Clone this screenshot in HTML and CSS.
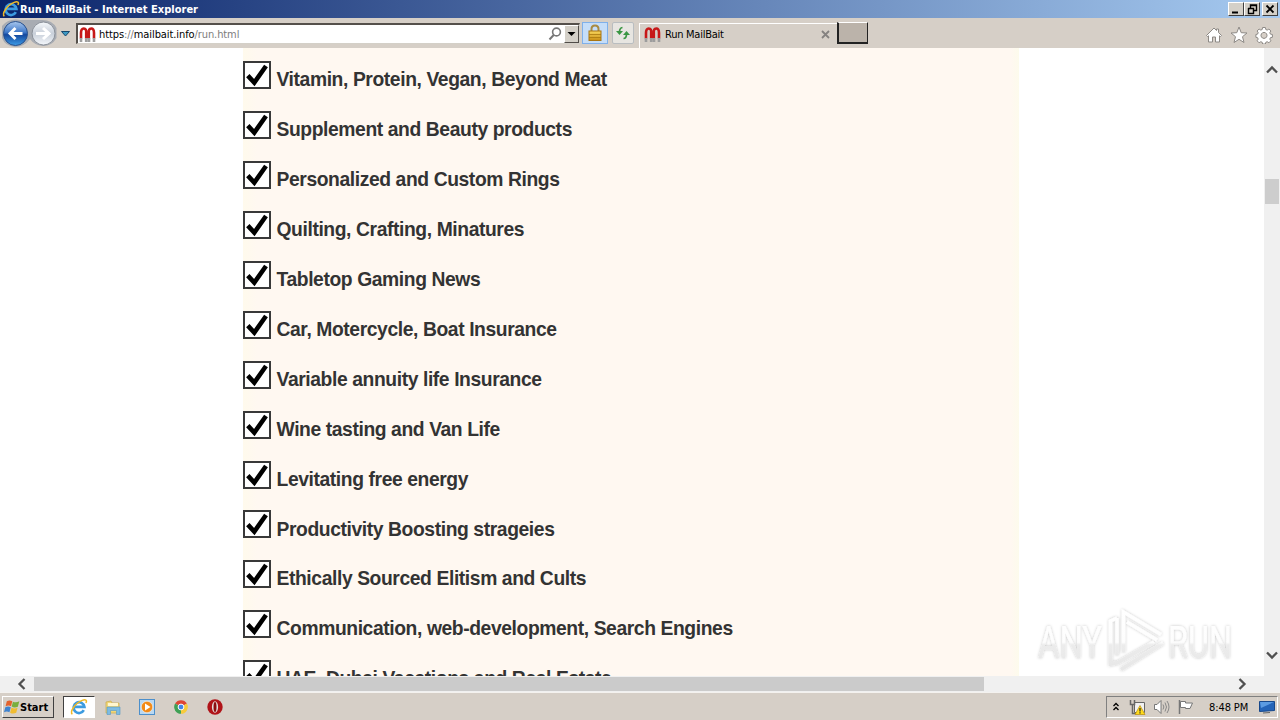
FILE: index.html
```html
<!DOCTYPE html>
<html lang="en">
<head>
    <meta charset="UTF-8">
    <title>Run MailBait</title>
    <link rel="stylesheet" href="styles.css">
</head>
<body>
<svg class="defs" width="0" height="0">
    <defs>
        <linearGradient id="blueBall" x1="0" y1="0" x2="0" y2="1">
            <stop offset="0" stop-color="#a9c8ee"/>
            <stop offset=".45" stop-color="#3f78c8"/>
            <stop offset=".55" stop-color="#14489e"/>
            <stop offset="1" stop-color="#3c9be6"/>
        </linearGradient>
        <linearGradient id="greyBall" x1="0" y1="0" x2="0" y2="1">
            <stop offset="0" stop-color="#f6f9fc"/>
            <stop offset=".5" stop-color="#c9d0da"/>
            <stop offset="1" stop-color="#f4f7fb"/>
        </linearGradient>
        <linearGradient id="gold" x1="0" y1="0" x2="0" y2="1">
            <stop offset="0" stop-color="#f7d55c"/>
            <stop offset="1" stop-color="#c98e14"/>
        </linearGradient>
        <linearGradient id="markFade" gradientUnits="userSpaceOnUse" x1="0" y1="4" x2="0" y2="68">
            <stop offset="0" stop-color="#ffffff"/>
            <stop offset=".52" stop-color="#fdfdfd"/>
            <stop offset=".56" stop-color="#ececec"/>
            <stop offset="1" stop-color="#e6e6e6"/>
        </linearGradient>
        <filter id="markShadow" x="-10%" y="-10%" width="120%" height="120%">
            <feDropShadow dx="0" dy="0" stdDeviation="1.5" flood-color="#000" flood-opacity=".24"/>
        </filter>
    </defs>
    <symbol id="tick" viewBox="0 0 24 24">
        <path d="M2.8 12.6 L9.3 19.6 L21 3" fill="none" stroke="#000" stroke-width="4.6"/>
    </symbol>
    <symbol id="ie" viewBox="0 0 18 18">
        <path d="M13.8 12.2 A5.4 5.4 0 1 1 14.4 8.9 H5" fill="none" stroke="#3c9be0" stroke-width="2.7"/>
        <path d="M2.4 16.2 C-.8 14.5 4.8 5.2 12.2 2.4 C15.6 1.1 17.4 2.2 15.9 5" fill="none" stroke="#efb928" stroke-width="1.5"/>
    </symbol>
    <symbol id="magnet" viewBox="0 0 17 17">
        <path d="M2 12.500 V7 Q2 2.500 4.800 2.500 T7.200 7 V12.500 M9.800 12.500 V7 Q9.400 2.500 12.200 2.500 T15 7 V12.500" fill="none" stroke="#c71818" stroke-width="2.600"/>
        <path d="M.7 12 h2.600 v4 h-2.600z M5.900 12 h2.600 v4 h-2.600z M8.700 12 h2.600 v4 h-2.600z M13.700 12 h2.600 v4 h-2.600z" fill="#9d9d9d"/>
    </symbol>
</svg>

<div class="titlebar">
    <svg class="title-icon" viewBox="0 0 18 18"><use href="#ie"/></svg>
    <span class="title-text">Run MailBait - Internet Explorer</span>
    <div class="win-buttons">
        <span class="win-btn"><svg viewBox="0 0 14 12"><path d="M3 9.5 h6" stroke="#000" stroke-width="2"/></svg></span>
        <span class="win-btn"><svg viewBox="0 0 14 12"><path d="M5.5 5 V2 H11.5 V7.5 H9 M5 2.5 H12 M3.5 5 V10.5 H8.5 V5.5 H3" fill="none" stroke="#000" stroke-width="1.4"/></svg></span>
        <span class="win-btn close"><svg viewBox="0 0 14 12"><path d="M3.5 2.5 L10.5 9.5 M10.5 2.5 L3.5 9.5" stroke="#000" stroke-width="1.8"/></svg></span>
    </div>
</div>

<div class="toolbar">
    <svg class="nav" viewBox="0 0 74 30">
        <path d="M2 8 Q9 0 20 2 H40 Q52 1 56.500 10 V20 Q52 28 43 28 Q34 27 30 21 Q24 29 15 29 Q5 28 2 20 Z" fill="#a8acb3"/>
        <circle cx="15.500" cy="15.500" r="12" fill="url(#blueBall)" stroke="#28508c"/>
        <path d="M15.500 10 L10 15.500 L15.500 21 M10.500 15.500 H22.500" fill="none" stroke="#fff" stroke-width="2.900"/>
        <circle cx="43.500" cy="15.500" r="11.500" fill="url(#greyBall)" stroke="#8a9099"/>
        <path d="M43 10 L49 15.500 L43 21 M48 15.500 H36" fill="none" stroke="#fff" stroke-width="3"/>
        <path d="M61.500 13.500 H69.500 L65.500 18 Z" fill="#3d9ac4" stroke="#17496e"/>
    </svg>
    <div class="address">
        <svg class="favicon" viewBox="0 0 17 17"><use href="#magnet"/></svg>
        <span class="url">https<i>://</i>mailbait.info<i>/run.html</i></span>
        <svg class="search" viewBox="0 0 14 14"><circle cx="8.500" cy="5" r="3.900" fill="none" stroke="#777" stroke-width="1.600"/><path d="M5.700 8 L1.500 12.500" stroke="#777" stroke-width="2"/></svg>
        <span class="drop"><svg viewBox="0 0 13 17"><path d="M2.500 6 H10.500 L6.500 10 Z"/></svg></span>
    </div>
    <div class="tool lock">
        <svg viewBox="0 0 24 20">
            <path d="M8.500 9 V6 Q8.500 2.500 12 2.500 T15.500 6 V9" fill="none" stroke="#a98a40" stroke-width="2"/>
            <rect x="6" y="8" width="12" height="9.500" fill="url(#gold)" stroke="#a87512"/>
            <path d="M6 11.500 H18 M6 14.500 H18" stroke="#a9780f" stroke-width=".8"/>
        </svg>
    </div>
    <div class="tool refresh">
        <svg viewBox="0 0 20 20">
            <path d="M9.500 4.500 Q6.500 5 6.500 9" fill="none" stroke="#3a9643" stroke-width="1.700"/>
            <path d="M3 8 H10 L6.500 12 Z" fill="#3a9643"/>
            <path d="M10.500 15.500 Q13.500 15.500 13.500 11" fill="none" stroke="#3a9643" stroke-width="1.700"/>
            <path d="M10 12 H17 L13.500 8 Z" fill="#3a9643"/>
        </svg>
    </div>
    <div class="tab">
        <svg class="favicon" viewBox="0 0 17 17"><use href="#magnet"/></svg>
        <span class="tab-text">Run MailBait</span>
        <svg class="tab-close" viewBox="0 0 9 9"><path d="M1 1 L8 8 M8 1 L1 8" stroke="#858280" stroke-width="1.800"/></svg>
    </div>
    <div class="new-tab"></div>
    <div class="tool-icons">
        <svg viewBox="0 0 18 18"><path d="M1.500 9.500 L9 2 L11.500 4.500 V3 H13.500 V6.500 L16.500 9.500 L15.500 10.500 L14.500 9.800 V16 H10.500 V11 H7.500 V16 H3.500 V9.800 L2.500 10.500 Z"/></svg>
        <svg viewBox="0 0 18 18"><path d="M9 1 L11.200 6.700 L17 7 L12.500 10.700 L14 16.500 L9 13.300 L4 16.500 L5.500 10.700 L1 7 L6.800 6.700 Z"/></svg>
        <svg viewBox="0 0 18 18"><path fill-rule="evenodd" d="M7.600 1.500 h2.800 l.4 2 1.400.6 1.700-1.100 2 2 -1.100 1.700.6 1.400 2 .4 v2.800 l-2 .4 -.6 1.400 1.100 1.700 -2 2 -1.700-1.100 -1.400.6 -.4 1.700 h-2.800 l-.4-1.700 -1.400-.6 -1.700 1.100 -2-2 1.100-1.700 -.6-1.400 -1.700-.4 v-2.800 l1.700-.4 .6-1.400 -1.100-1.700 2-2 1.700 1.100 1.400-.6 Z M9 6.400 a3 3 0 1 0 .01 0 Z"/></svg>
    </div>
</div>

<div class="viewport">
    <div class="page">
        <div class="content">
            <div class="item"><span class="box"><svg><use href="#tick"/></svg></span><label>Vitamin, Protein, Vegan, Beyond Meat</label></div>
            <div class="item"><span class="box"><svg><use href="#tick"/></svg></span><label>Supplement and Beauty products</label></div>
            <div class="item"><span class="box"><svg><use href="#tick"/></svg></span><label>Personalized and Custom Rings</label></div>
            <div class="item"><span class="box"><svg><use href="#tick"/></svg></span><label>Quilting, Crafting, Minatures</label></div>
            <div class="item"><span class="box"><svg><use href="#tick"/></svg></span><label>Tabletop Gaming News</label></div>
            <div class="item"><span class="box"><svg><use href="#tick"/></svg></span><label>Car, Motercycle, Boat Insurance</label></div>
            <div class="item"><span class="box"><svg><use href="#tick"/></svg></span><label>Variable annuity life Insurance</label></div>
            <div class="item"><span class="box"><svg><use href="#tick"/></svg></span><label>Wine tasting and Van Life</label></div>
            <div class="item"><span class="box"><svg><use href="#tick"/></svg></span><label>Levitating free energy</label></div>
            <div class="item"><span class="box"><svg><use href="#tick"/></svg></span><label>Productivity Boosting strageies</label></div>
            <div class="item"><span class="box"><svg><use href="#tick"/></svg></span><label>Ethically Sourced Elitism and Cults</label></div>
            <div class="item"><span class="box"><svg><use href="#tick"/></svg></span><label>Communication, web-development, Search Engines</label></div>
            <div class="item"><span class="box"><svg><use href="#tick"/></svg></span><label>UAE, Dubai Vacations and Real Estate</label></div>
        </div>
    </div>
    <div class="vscroll">
        <svg viewBox="0 0 16 10"><path d="M3 7.500 L8 2.500 L13 7.500"/></svg>
        <div class="vthumb"></div>
        <svg viewBox="0 0 16 10"><path d="M3 2.500 L8 7.500 L13 2.500"/></svg>
    </div>
    <svg class="watermark" viewBox="0 0 210 71">
        <g filter="url(#markShadow)" fill="url(#markFade)">
            <text x="8" y="53" textLength="64" lengthAdjust="spacingAndGlyphs">ANY</text>
            <text x="138" y="53" textLength="64" lengthAdjust="spacingAndGlyphs">RUN</text>
            <g fill="none" stroke="url(#markFade)" stroke-width="3.500">
                <path d="M87 13 L80.500 16 V59 L88 57.500 L124 37"/>
                <path d="M87 50 V13"/>
                <path d="M93.500 47 V7 L131 29.500"/>
                <path d="M97 17 L127 35"/>
                <path d="M133 38 L91 64.500"/>
            </g>
        </g>
    </svg>
</div>

<div class="hscroll">
    <svg viewBox="0 0 10 16"><path d="M7.500 3 L2.500 8 L7.500 13"/></svg>
    <div class="hthumb"></div>
    <svg viewBox="0 0 10 16"><path d="M2.500 3 L7.500 8 L2.500 13"/></svg>
</div>

<div class="taskbar">
    <div class="start">
        <svg viewBox="0 0 17 16">
            <path d="M3 2 Q6 0 8.800 2 L7.500 7.300 Q5 5.700 1.700 7.300 Z" fill="#e4622c"/>
            <path d="M9.500 2.300 Q12.500 4 16.300 2 L14.700 7.800 Q11 9.500 8.200 7.600 Z" fill="#79ae3d"/>
            <path d="M1.400 8.300 Q4.500 6.700 7.200 8.300 L5.800 13.500 Q3 12 0 13.500 Z" fill="#3f83cf"/>
            <path d="M8 8.600 Q11 10.300 14.400 8.800 L13 14.200 Q9.500 15.800 6.500 14 Z" fill="#f0bc31"/>
        </svg>
        <span>Start</span>
    </div>
    <div class="pinned active"><svg viewBox="0 0 18 18"><use href="#ie"/></svg></div>
    <div class="pinned">
        <svg viewBox="0 0 18 18">
            <path d="M2 4 L7 3 L8 5 H15 V15 H2 Z" fill="#f1d778" stroke="#c9a94b" stroke-width=".7"/>
            <path d="M4 5 H14 V8 H4 Z" fill="#fff6cf"/>
            <path d="M3 9 H16 V16.500 H12.500 V12.500 H6.500 V16.500 H3 Z" fill="#7dbbe2" stroke="#5597c4" stroke-width=".6"/>
        </svg>
    </div>
    <div class="pinned">
        <svg viewBox="0 0 18 18">
            <rect x="1.500" y="1.500" width="15" height="15" fill="#b9d8f2" stroke="#4c8fcb"/>
            <circle cx="9" cy="9" r="5.700" fill="#f28a17" stroke="#fff" stroke-width=".5"/>
            <path d="M7 5.500 L12.500 9 L7 12.500 Z" fill="#fff"/>
        </svg>
    </div>
    <div class="pinned">
        <svg viewBox="0 0 18 18">
            <path d="M9 9 L3.100 5.600 A6.800 6.800 0 0 1 14.900 5.600 Z" fill="#de4535"/>
            <path d="M9 9 L14.900 5.600 A6.800 6.800 0 0 1 9 15.800 Z" fill="#f7cb3c"/>
            <path d="M9 9 V15.800 A6.800 6.800 0 0 1 3.100 5.600 Z" fill="#3fa055"/>
            <circle cx="9" cy="9" r="2.900" fill="#4285e8" stroke="#fff"/>
        </svg>
    </div>
    <div class="pinned">
        <svg viewBox="0 0 18 18">
            <circle cx="9" cy="9" r="7.700" fill="#b01318"/>
            <ellipse cx="9" cy="9" rx="3.100" ry="5.800" fill="#e4dedc"/>
            <ellipse cx="9" cy="9" rx="1.500" ry="5" fill="#8c0d10"/>
        </svg>
    </div>
    <div class="tray">
        <svg class="chevrons" viewBox="0 0 8 10"><path d="M1.500 4 L4 1.500 L6.500 4 M1.500 8 L4 5.500 L6.500 8" fill="none" stroke="#000" stroke-width="1.300"/></svg>
        <svg class="network" viewBox="0 0 17 16">
            <path d="M5.500 3.500 H15.500 V13.500 H5.500 Z" fill="#f1f1f1" stroke="#666"/>
            <path d="M1.500 1 V5.500 H5.500 V1 M3.500 5.500 V14.500 H8" fill="none" stroke="#666" stroke-width="1.500"/>
            <path d="M11 6.500 L16 15.500 H6 Z" fill="#ffdb1c" stroke="#b88d0c" stroke-width=".7"/>
            <path d="M11 9 V12.500 M11 13.300 V14.500" stroke="#222" stroke-width="1.200"/>
        </svg>
        <svg class="volume" viewBox="0 0 17 16">
            <path d="M1.500 5.500 H4 L8 1.500 V14.500 L4 10.500 H1.500 Z" fill="#fff" stroke="#777"/>
            <path d="M10 5.500 Q11.700 8 10 10.500 M12 3.500 Q15 8 12 12.500 M14 2 Q18 8 14 14" fill="none" stroke="#888"/>
        </svg>
        <svg class="flag" viewBox="0 0 17 16">
            <path d="M2.500 1 V15" stroke="#777" stroke-width="1.500"/>
            <path d="M3.500 2.500 H8.500 V4 H15.500 L13 9.500 H8.500 V8.500 H3.500 Z" fill="#fff" stroke="#777"/>
        </svg>
        <span class="clock">8:48 PM</span>
        <svg class="desktop" viewBox="0 0 16 14"><path d="M.5 1.500 H15.500 V10.500 L.5 11.500 Z" fill="#2464b8" stroke="#17488b"/><path d="M1 2 H15 L2 8 Z" fill="#5b9be2"/><path d="M4 13 L11 12.500" stroke="#666"/></svg>
    </div>
</div>
</body>
</html>
```

FILE: styles.css
```css
* {
    box-sizing: border-box;
}

body {
    margin: 0;
    width: 1280px;
    height: 720px;
    overflow: hidden;
    display: flex;
    flex-direction: column;
    background-color: #fff;
    font-family: "DejaVu Sans Condensed", "DejaVu Sans", sans-serif;
    font-size: 11px;
    color: #000;
}

svg {
    display: block;
    flex: none;
}

.defs {
    height: 0;
}

/* window title */
.titlebar {
    flex: none;
    display: flex;
    align-items: center;
    height: 18px;
    padding-left: 2px;
    background: linear-gradient(to right, #0a246a, #a6caf0);
}

.title-icon {
    width: 18px;
    height: 18px;
}

.title-text {
    flex: 1;
    color: #fff;
    font-weight: bold;
    white-space: nowrap;
    letter-spacing: 0.01px;
}

.win-buttons {
    display: flex;
    padding-right: 2px;
}

.win-btn {
    width: 16px;
    height: 14px;
    background-color: #d4d0c8;
    border: 1px solid;
    border-color: #fff #404040 #404040 #fff;
}

.close {
    margin-left: 2px;
}

/* navigation and tabs */
.toolbar {
    flex: none;
    display: flex;
    align-items: flex-start;
    height: 30px;
    background-color: #d6cfc7;
}

.nav {
    width: 74px;
    height: 30px;
}

.address {
    display: flex;
    align-items: center;
    width: 504px;
    height: 21px;
    margin: 5px 0 0 2px;
    padding-left: 1px;
    background-color: #fff;
    border: 1px solid #d4d0c8;
    border-color: #55504b #d4d0c8 #d4d0c8 #55504b;
    border-width: 2px 1px 1px 2px;
}

.favicon {
    width: 17px;
    height: 17px;
}

.url {
    flex: 1;
    margin-left: 3px;
    white-space: nowrap;
    letter-spacing: -0.09px;
}

.url i {
    font-style: normal;
    color: #7d7d7d;
}

.search {
    width: 14px;
    height: 14px;
    margin-right: 2px;
}

.drop {
    width: 15px;
    height: 18px;
    background-color: #d4d0c8;
    border: 1px solid;
    border-color: #fff #504c48 #504c48 #fff;
}

.tool {
    height: 22px;
    margin-top: 4px;
    border: 1px solid #7fb0ea;
}

.lock {
    width: 26px;
    margin-left: 2px;
    background-color: #c5ddf8;
}

.refresh {
    width: 22px;
    margin-left: 4px;
    background-color: #e7e5e1;
    border-color: #b9bdc0;
    border-radius: 2px;
}

.tab {
    display: flex;
    align-items: center;
    width: 198px;
    height: 25px;
    margin: 5px 0 0 5px;
    padding: 0 7px 4px 4px;
    border-top: 1px solid #fff;
    border-left: 1px solid #fff;
}

.tab-text {
    flex: 1;
    margin-left: 4px;
    letter-spacing: -0.25px;
}

.tab-close {
    width: 9px;
    height: 9px;
}

.new-tab {
    width: 31px;
    height: 22px;
    margin-top: 4px;
    background-color: #bbb3aa;
    border: 1px solid;
    border-color: #fff #222 #222 #222;
    border-width: 1px 1px 2px 2px;
}

.tool-icons {
    display: flex;
    gap: 7px;
    margin: 8px 7px 0 auto;
}

.tool-icons svg {
    width: 18px;
    height: 18px;
    fill: #fff;
    stroke: #8d8985;
}

/* web page */
.viewport {
    position: relative;
    display: flex;
    height: 628px;
    overflow: hidden;
}

.page {
    flex: 1;
    padding-left: 243px;
}

.content {
    width: 776px;
    height: 628px;
    overflow: hidden;
    padding-top: 13.3px;
    background: linear-gradient(to right, #fffaec, #fff8f1 14px, #fff8f1 768px, #fdfbec);
}

.item {
    display: flex;
    height: 49.91px;
}

.box {
    width: 28px;
    height: 28px;
    background-color: #fff;
    border: 2px solid #393939;
}

.box svg {
    width: 24px;
    height: 24px;
}

.item label {
    margin-left: 5.5px;
    padding-top: 8.1px;
    font: bold 19.3px/22px "Liberation Sans", Arial, sans-serif;
    letter-spacing: -0.4px;
    color: #333;
    white-space: nowrap;
}

.vscroll {
    display: flex;
    flex-direction: column;
    align-items: center;
    width: 16px;
    padding: 17px 0 16px;
    background-color: #f0f0f0;
}

.vscroll svg {
    width: 16px;
    height: 10px;
}

.vscroll path,
.hscroll path {
    fill: none;
    stroke: #505050;
    stroke-width: 2.3;
}

.vthumb {
    width: 14px;
    height: 25px;
    margin: 104px 0 auto;
    background-color: #cdcdcd;
}

/* logo laid over the page */
.watermark {
    position: absolute;
    left: 1030px;
    top: 557px;
    width: 210px;
    height: 71px;
    font: 45px Roboto, sans-serif;
}

.hscroll {
    flex: none;
    display: flex;
    align-items: center;
    height: 16px;
    padding: 0 33px 0 17px;
    background-color: #f0f0f0;
}

.hscroll svg {
    width: 10px;
    height: 16px;
}

.hthumb {
    width: 950px;
    height: 14px;
    margin: 0 auto 0 7px;
    background-color: #cbcbcb;
}

/* taskbar */
.taskbar {
    flex: none;
    display: flex;
    align-items: center;
    height: 28px;
    padding: 1px 2px 0;
    background-color: #d6cfc7;
    border-top: 1px solid #f4f2ef;
}

.start {
    display: flex;
    align-items: center;
    width: 52px;
    height: 22px;
    padding-left: 1px;
    font-weight: bold;
    border: 1px solid;
    border-color: #fff #404040 #404040 #fff;
}

.start svg {
    width: 16px;
    height: 16px;
}

.pinned {
    display: flex;
    align-items: center;
    justify-content: center;
    width: 32px;
    height: 22px;
    margin-right: 2px;
}

.pinned svg {
    width: 18px;
    height: 18px;
}

.pinned.active {
    margin-left: 9px;
    background-color: #fff;
    border: 1px solid;
    border-color: #404040 #fff #fff #404040;
}

.tray {
    display: flex;
    align-items: center;
    width: 172px;
    height: 22px;
    margin-left: auto;
    padding-left: 5px;
    border: 1px solid;
    border-color: #808080 #fff #fff #808080;
}

.chevrons {
    width: 8px;
    height: 10px;
}

.network,
.volume,
.flag {
    width: 17px;
    height: 16px;
}

.network {
    margin-left: 9px;
}

.volume,
.flag {
    margin-left: 7px;
}

.clock {
    margin-left: 15px;
    white-space: nowrap;
    letter-spacing: -0.1px;
}

.desktop {
    width: 16px;
    height: 14px;
    margin: 0 2px 0 auto;
}
```
